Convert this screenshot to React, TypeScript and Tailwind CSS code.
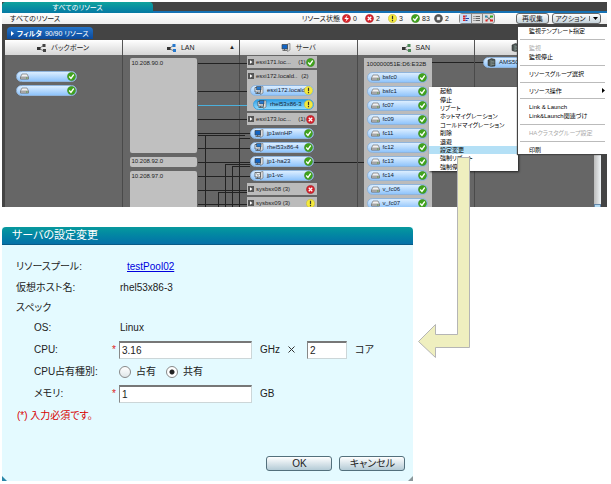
import { useState } from 'react';
import type { ReactNode } from 'react';

type Estado = 'critical' | 'error' | 'warn' | 'ok' | 'unknown';
type TipoIcono = 'disk' | 'esx' | 'pc' | 'vm' | 'rack';

const colorEstado: Record<Estado, string> = {
  critical: '#d8262c',
  error: '#d3202a',
  warn: '#f5ea3c',
  ok: '#3fa21c',
  unknown: '#555555',
};

function StatusIcon({ status }: { status: Estado }) {
  return (
    <svg className="size-[9px] shrink-0" viewBox="0 0 18 18">
      <circle cx="9" cy="9" r="8.4" fill={colorEstado[status]} stroke={status === 'warn' ? '#b9b040' : '#00000040'} />
      {status === 'critical' && <path d="M11 2.5 4.5 10H9l-2 5.5L14 8H9z" fill="#fff" />}
      {status === 'error' && <path d="m5.5 5.5 7 7m0-7-7 7" stroke="#fff" strokeWidth="2.6" />}
      {status === 'warn' && <path d="M9 3.5v6.8m0 1.7v2.6" stroke="#333" strokeWidth="2.4" />}
      {status === 'ok' && <path d="m4.5 9 3.4 3.8L13.5 5" fill="none" stroke="#fff" strokeWidth="2.6" />}
      {status === 'unknown' && <path d="M6 6h6v6H6z" fill="#fff" stroke="#bbb" />}
    </svg>
  );
}

function DeviceIcon({ kind }: { kind: TipoIcono }) {
  if (kind === 'disk') {
    return (
      <svg className="w-[9px] h-[7px] shrink-0" viewBox="0 0 18 14">
        <path d="M4 2h10l3 6v4H1V8z" fill="#f1f1f1" stroke="#777" strokeWidth="1.4" />
        <path d="M1 8h16v4H1z" fill="#bbb" stroke="#666" />
        <path d="M12 10h3" stroke="#3c9b28" strokeWidth="1.6" />
      </svg>
    );
  }
  if (kind === 'rack') {
    return (
      <svg className="size-[9px] shrink-0" viewBox="0 0 18 18">
        <path d="m2 4 7-3 7 2v13l-8 1-6-2z" fill="#4b5654" stroke="#222" />
        <path d="M8 4v13M9 7l6-.6M9 10l6-.4M9 13h6" stroke="#a9b8b2" />
      </svg>
    );
  }
  return (
    <svg className="w-[10px] h-[9px] shrink-0" viewBox="0 0 20 18">
      <path d="m13 2 5-1v13l-5 3z" fill="#ddd" stroke="#555" />
      <path d="M2 3h11v9H2z" fill={kind === 'pc' ? '#1264c4' : '#eef5fb'} stroke="#444" strokeWidth="1.4" />
      {kind === 'esx' && <path d="M5 1h9v7H5z" fill="#2679ce" stroke="#333" />}
      <path d="M3 15h9M7 12v3" stroke="#555" strokeWidth="1.6" />
      {kind === 'vm' && <path d="m5 5 3 4 4-4" fill="none" stroke="#555" strokeWidth="1.4" />}
    </svg>
  );
}

function NetIcon({ color }: { color: string }) {
  return (
    <svg className="w-[9px] h-2 shrink-0" viewBox="0 0 18 16">
      <path d="M4 9 13 3M4 9l10 5" stroke="#555" strokeWidth="1.4" />
      <path d="M0 6h7v6H0z" fill="#333" />
      <path d="M11 0h6v6h-6zM12 10h6v6h-6z" fill={color} />
    </svg>
  );
}

function Pill({ name, status, kind, active }: { name?: string; status?: Estado; kind: TipoIcono; active?: boolean }) {
  return (
    <button
      type="button"
      className={
        'flex h-[11px] w-full min-w-0 items-center gap-[3px] rounded-full border pl-[3px] text-[#123] ' +
        (active
          ? 'border-[#3fa4e0] bg-linear-to-b from-[#2b9fe6] to-[#8fdcff]'
          : 'border-[#8fb4dc] bg-linear-to-b from-[#dceeff] to-[#8fc4fb]')
      }
    >
      <DeviceIcon kind={kind} />
      <span className="min-w-0 flex-1 whitespace-nowrap text-left leading-[9px]">{name}</span>
      {status && <StatusIcon status={status} />}
    </button>
  );
}

function HostRow({ name, count, status }: { name: string; count: string; status?: Estado }) {
  return (
    <div className="flex h-3 items-center pl-px pr-0.5 text-[#222]">
      <svg className="size-[6px] shrink-0" viewBox="0 0 12 12">
        <path d="M0 0h12v12H0z" fill="#555" />
        <path d="m4 2.5 5 3.5-5 3.5z" fill="#fff" />
      </svg>
      <span className="ml-0.5 flex-1 whitespace-nowrap">{name}</span>
      <span>{count}</span>
      {status ? <StatusIcon status={status} /> : <span className="w-1.5 shrink-0" />}
    </div>
  );
}

function ColumnHead({ icon, title, sorted }: { icon: ReactNode; title: string; sorted?: boolean }) {
  return (
    <div className="relative flex h-[15px] items-center justify-center gap-[5px] border-r border-[#555] bg-linear-to-b from-white to-[#d6d6d6] text-[#222]">
      {icon}
      <span>{title}</span>
      {sorted && <span className="absolute right-1 text-[6px]">▲</span>}
    </div>
  );
}

const resumen: { status: Estado; count: number }[] = [
  { status: 'critical', count: 0 },
  { status: 'error', count: 2 },
  { status: 'warn', count: 3 },
  { status: 'ok', count: 83 },
  { status: 'unknown', count: 2 },
];

const servidores: { name: string; status: Estado; kind: TipoIcono }[] = [
  { name: 'jp1winHP', status: 'ok', kind: 'pc' },
  { name: 'rhel53x86-4', status: 'ok', kind: 'esx' },
  { name: 'jp1-ha23', status: 'ok', kind: 'pc' },
  { name: 'jp1-vc', status: 'ok', kind: 'vm' },
];

const san = ['bsfc0', 'bsfc1', 'fc07', 'fc09', 'fc11', 'fc12', 'fc13', 'fc14', 'v_fc06', 'v_fc07'];

const menuServidor = [
  '起動', '停止', 'リブート', 'ホットマイグレーション', 'コールドマイグレーション',
  '削除', '退避', '設定変更', '強制リブート', '強制停止',
];

// null = separador
const menuAccion: ({ label: string; disabled?: boolean; sub?: boolean } | null)[] = [
  { label: '監視テンプレート指定' },
  null,
  { label: '監視', disabled: true },
  { label: '監視停止' },
  null,
  { label: 'リソースグループ選択' },
  null,
  { label: 'リソース操作', sub: true },
  null,
  { label: 'Link & Launch' },
  { label: 'Link&Launch関連づけ' },
  null,
  { label: 'HAクラスタグループ設定', disabled: true },
  null,
  { label: '印刷' },
];

function Connectors() {
  return (
    <svg className="absolute left-0 top-0 h-[152px] w-[480px]" fill="none" stroke="#222" shapeRendering="crispEdges">
      <path d="M193 8h50M193 36h52M193 64h50M193 78h52M193 80h47M193 93h52M193 107h52M193 121h52M193 135h50M193 149h50" />
      <path d="M200 152V80M234 152V83h11M220 152v-43h25M227 152v-41h18M213 152v-15h30" />
      <path d="M306 107h53M427 7h52" />
      <path d="M193 50h58" stroke="#4bb0dc" />
    </svg>
  );
}

function ContextMenu() {
  return (
    <div className="absolute left-[427px] top-[85px] flex h-[84px] w-[89px] flex-col bg-white text-[6px] shadow-[1px_1px_2px_#222]">
      {menuServidor.map((m) => (
        <button
          key={m}
          type="button"
          className={
            'flex flex-1 items-center whitespace-nowrap pl-[11px] leading-[8px] text-black ' +
            (m === '設定変更' ? 'bg-[#b4e0f6]' : '')
          }
        >
          {m}
        </button>
      ))}
    </div>
  );
}

function ActionMenu() {
  return (
    <div className="absolute right-0 top-[25px] flex h-[127px] w-[89px] flex-col bg-white text-[6px] shadow-[-1px_1px_1px_#444]">
      {menuAccion.map((m, i) =>
        m ? (
          <button
            key={m.label}
            type="button"
            disabled={m.disabled}
            className={
              'flex flex-1 items-center whitespace-nowrap pl-[11px] pr-0.5 leading-[8px] ' +
              (m.disabled ? 'text-[#aaa]' : 'text-black')
            }
          >
            <span className="flex-1 text-left">{m.label}</span>
            {m.sub && (
              <svg className="h-[5px] w-[3px]" viewBox="0 0 3 5">
                <path d="m0 0 3 2.5L0 5z" />
              </svg>
            )}
          </button>
        ) : (
          <div key={i} className="flex flex-1 items-center px-0.5">
            <hr className="w-full border-[#bbb]" />
          </div>
        )
      )}
    </div>
  );
}

function ResourceWindow() {
  return (
    <section className="relative bg-[#444] text-[7px] leading-[9px]">
      <div className="flex h-[11px] border-b-2 border-[#1672b4]">
        <button
          type="button"
          className="-mb-0.5 h-[11px] w-[25%] rounded-t-sm bg-linear-to-b from-[#10a39c] to-[#0879a4] text-center text-white"
        >
          すべてのリソース
        </button>
      </div>

      <div className="flex h-[11px] items-center bg-linear-to-b from-white to-[#eee] pl-2 pr-1.5 text-[#222]">
        <h1 className="flex-1">すべてのリソース</h1>
        <span className="mr-0.5">リソース状態</span>
        <div className="flex">
          {resumen.map((r) => (
            <span key={r.status} className="flex w-[23px] items-center gap-0.5 whitespace-nowrap">
              <StatusIcon status={r.status} />
              {r.count}
            </span>
          ))}
        </div>
        <div className="ml-0.5 mr-[21px] flex h-[11px] divide-x divide-[#888] rounded-[3px] border border-[#888] bg-[#ddd]">
          <button type="button" aria-label="マップ" className="flex w-3 items-center justify-center bg-[#c8def5]">
            <svg className="h-[7px] w-2" viewBox="0 0 16 14">
              <path d="M2 1h5v3H2zM2 5h5v3H2zM2 9h5v3H2z" fill="#d22" />
              <path d="M7 2h3m-3 5h7M7 11h4" stroke="#24a" strokeWidth="2" />
            </svg>
          </button>
          <button type="button" aria-label="リスト" className="flex w-[11px] items-center justify-center">
            <svg className="h-[7px] w-2" viewBox="0 0 16 14">
              <path d="M1 3h2m2 0h9M1 7h2m2 0h9M1 11h2m2 0h9" stroke="#444" strokeWidth="1.6" />
            </svg>
          </button>
          <button type="button" aria-label="グループ" className="flex w-[11px] items-center justify-center">
            <svg className="h-[7px] w-2" viewBox="0 0 16 14">
              <path d="m3 3 10 8M13 3 3 11" stroke="#333" strokeWidth="1.2" />
              <path d="M0 1h5v4H0z" fill="#38a" />
              <path d="M10 1h6v4h-6z" fill="#3a2" />
              <path d="M1 9h4v4H1zM10 9h6v4h-6z" fill="#d22" />
            </svg>
          </button>
        </div>
        <button type="button" className="h-[11px] w-[33px] rounded-[3px] border border-[#666] bg-linear-to-b from-white to-[#c4d2da]">
          再収集
        </button>
        <button
          type="button"
          className="ml-[3px] flex h-[11px] w-[49px] items-center justify-center gap-[3px] whitespace-nowrap rounded-[3px] border border-[#666] bg-linear-to-b from-white to-[#c4d2da]"
        >
          アクション
          <span className="h-[5px] border-l border-[#777]" />
          <svg className="h-[3px] w-[5px] shrink-0" viewBox="0 0 5 3">
            <path d="M0 0h5L2.5 3z" />
          </svg>
        </button>
      </div>

      <div className="flex h-4 items-end pl-[5px]">
        <button
          type="button"
          className="mb-px flex h-3 items-center gap-[3px] whitespace-nowrap rounded-t-sm bg-linear-to-b from-[#2474c8] to-[#0b4a9c] px-1 text-white"
        >
          <svg className="h-[5px] w-[3px] shrink-0" viewBox="0 0 3 5">
            <path d="m0 0 3 2.5L0 5z" fill="#fff" />
          </svg>
          <strong>フィルタ</strong>
          <span>90/90 リソース</span>
        </button>
      </div>

      <div className="pl-[3px] pr-1.5">
        <div className="grid grid-cols-[repeat(4,minmax(0,1fr))_126px]">
          <ColumnHead icon={<NetIcon color="#444" />} title="バックボーン" />
          <ColumnHead icon={<NetIcon color="#2679ce" />} title="LAN" sorted />
          <ColumnHead icon={<DeviceIcon kind="pc" />} title="サーバ" />
          <ColumnHead icon={<NetIcon color="#4c8a58" />} title="SAN" />
          <div className="flex h-[15px] items-center bg-linear-to-b from-white to-[#d6d6d6] pl-9">
            <DeviceIcon kind="rack" />
          </div>
        </div>

        <div className="relative grid h-[152px] grid-cols-[repeat(4,minmax(0,1fr))_126px] overflow-hidden bg-[#666] text-[6px]">
          <Connectors />

          <div className="border-r border-[#4a4a4a] pl-[11px] pr-[45px] pt-4">
            <Pill kind="disk" status="ok" />
            <div className="mt-[3px]">
              <Pill kind="disk" status="ok" />
            </div>
          </div>

          <div className="flex flex-col gap-1 border-r border-[#4a4a4a] pl-[7px] pr-[42px] pt-[3px] text-[#222]">
            <div className="h-[95px] rounded-xs bg-[#c0c0c0] px-0.5 pt-px">10.208.90.0</div>
            <div className="h-[10px] rounded-xs bg-[#c0c0c0] px-0.5">10.208.92.0</div>
            <div className="h-10 rounded-xs bg-[#c0c0c0] px-0.5 pt-px">10.208.97.0</div>
          </div>

          <div className="relative flex flex-col gap-0.5 border-r border-[#4a4a4a] pl-[7px] pr-[40px] pt-px">
            <div className="bg-[#bbb]">
              <HostRow name="esxi171.loc..." count="(1)" status="ok" />
            </div>
            <div className="bg-[#bbb]">
              <HostRow name="esxi172.locald.." count="(2)" />
              <div className="mt-[3px] flex flex-col gap-[3px] pb-px pl-[3px] pr-[3px]">
                <Pill name="esxi172.locald." kind="esx" status="warn" />
                <div className="pl-[3px]">
                  <Pill name="rhel53x86-3" kind="esx" status="warn" active />
                </div>
              </div>
            </div>
            <div className="bg-[#bbb]">
              <HostRow name="esxi173.loc..." count="(1)" status="error" />
            </div>
            <div className="flex flex-col gap-[3px] pt-px pl-[3px] pr-[3px]">
              {servidores.map((s) => (
                <Pill key={s.name} {...s} />
              ))}
            </div>
            <div className="bg-[#bbb]">
              <HostRow name="sysbsx08 (3)" count="" status="error" />
            </div>
            <div className="bg-[#bbb]">
              <HostRow name="sysbsx09 (3)" count="" status="warn" />
            </div>
          </div>

          <div className="relative border-r border-[#4a4a4a] pl-[6px] pr-[42px] pt-[3px]">
            <div className="bg-[#bbb] pl-[3px] pr-1">
              <div className="h-[14px] whitespace-nowrap pt-0.5 text-[#222]">100000051E:D6:E32B</div>
              <div className="flex flex-col gap-[3px]">
                {san.map((s) => (
                  <Pill key={s} name={s} kind="disk" status="ok" />
                ))}
              </div>
            </div>
          </div>

          <div className="relative flex justify-between pl-2">
            <div className="w-[60px] pt-0.5">
              <Pill name="AMS500" kind="rack" />
            </div>
            <div className="flex w-[7px] flex-col bg-linear-to-r from-[#bbb] to-[#eef3f6]">
              <button
                type="button"
                aria-label="下へスクロール"
                className="mt-auto flex h-[7px] items-center justify-center border border-[#68a] bg-[#b4dcf4]"
              >
                <svg className="h-[2px] w-[3px] shrink-0" viewBox="0 0 3 2">
                  <path d="M0 0h3L1.5 2z" />
                </svg>
              </button>
            </div>
          </div>
        </div>
      </div>

      <ContextMenu />
      <ActionMenu />
    </section>
  );
}

const inputClass =
  'h-[18px] min-w-0 border border-[#ccd6d8] border-t-[#777] border-l-[#888] border-t-2 bg-white px-0.5 text-[#222] outline-none';

const radioClass =
  'size-3 appearance-none rounded-full border border-[#888] bg-linear-to-b from-white to-[#dfe6e8] checked:bg-[radial-gradient(circle,#222_0_2px,#fff_3px)]';

const botonClass =
  'h-[15px] w-[66px] rounded-[3px] border border-[#53707c] bg-linear-to-b from-white to-[#b4cbd6] leading-none text-[#222]';

function ServerDialog() {
  const [cpu, setCpu] = useState('3.16');
  const [cores, setCores] = useState('2');
  const [memoria, setMemoria] = useState('1');
  const [tipo, setTipo] = useState('shared');

  return (
    <form
      onSubmit={(e) => e.preventDefault()}
      className="relative mt-5 w-[68%] overflow-hidden bg-[#e4faff] pb-[10px] text-[10px] leading-[14px] text-[#222]"
    >
      <h2 className="h-[18px] rounded-t-sm border-b border-[#075a86] bg-linear-to-b from-[#08999d] to-[#0670a8] pl-[10px] text-[11px] leading-[17px] text-white">
        サーバの設定変更
      </h2>

      <div className="grid grid-cols-[96px_1fr] items-center pl-[14px] pt-[11px]">
        <span className="flex h-[21px] items-center">リソースプール:</span>
        <a href="#pool" className="pl-[15px] text-[#0000dd] underline">testPool02</a>
        <span className="flex h-[21px] items-center">仮想ホスト名:</span>
        <span className="pl-2">rhel53x86-3</span>
        <span className="col-span-2 flex h-5 items-center">スペック</span>
        <span className="flex h-5 items-center pl-[18px]">OS:</span>
        <span className="pl-2">Linux</span>

        <label htmlFor="cpu" className="pl-[18px]">CPU:</label>
        <div className="flex h-[23px] items-center">
          <span className="w-[7px] text-[#d22]">*</span>
          <input id="cpu" value={cpu} onChange={(e) => setCpu(e.target.value)} className={inputClass + ' w-[133px]'} />
          <span className="ml-2 w-[28px]">GHz</span>
          <svg className="mr-[12px] size-[7px]" viewBox="0 0 7 7" fill="none" stroke="#333">
            <path d="m.5.5 6 6m0-6-6 6" />
          </svg>
          <input
            id="cores"
            value={cores}
            onChange={(e) => setCores(e.target.value)}
            className={inputClass + ' w-10'}
          />
          <label htmlFor="cores" className="ml-2">コア</label>
        </div>

        <span className="whitespace-nowrap pl-[18px]">CPU占有種別:</span>
        <div className="flex h-[21px] items-center pl-[7px]">
          <input
            id="dedicated"
            type="radio"
            name="tipo"
            checked={tipo === 'dedicated'}
            onChange={() => setTipo('dedicated')}
            className={radioClass}
          />
          <label htmlFor="dedicated" className="ml-[5px] w-[30px]">占有</label>
          <input
            id="shared"
            type="radio"
            name="tipo"
            checked={tipo === 'shared'}
            onChange={() => setTipo('shared')}
            className={radioClass}
          />
          <label htmlFor="shared" className="ml-[5px]">共有</label>
        </div>

        <label htmlFor="memoria" className="pl-[18px]">メモリ:</label>
        <div className="flex h-[23px] items-center">
          <span className="w-[7px] text-[#d22]">*</span>
          <input
            id="memoria"
            value={memoria}
            onChange={(e) => setMemoria(e.target.value)}
            className={inputClass + ' w-[133px]'}
          />
          <span className="ml-2">GB</span>
        </div>
      </div>

      <p className="pl-[15px] pt-1 text-[#d80000]">(*) 入力必須です。</p>

      <div className="mt-[33px] flex justify-end gap-[7px] pr-2">
        <button type="submit" className={botonClass}>OK</button>
        <button type="button" className={botonClass}>キャンセル</button>
      </div>

      <svg className="absolute bottom-0 left-0 size-[5px]" viewBox="0 0 5 5">
        <path d="M0 0v5h5z" fill="#2a86a8" />
      </svg>
      <svg className="absolute bottom-0 right-0 size-[5px]" viewBox="0 0 5 5">
        <path d="M5 0v5H0z" fill="#8a979b" />
      </svg>
    </form>
  );
}

export default function App() {
  return (
    <main className="relative min-h-screen bg-white pl-0.5 pr-1 pt-0.5 font-['Liberation_Sans','Noto_Sans_CJK_JP',sans-serif] [font-feature-settings:'palt']">
      <ResourceWindow />
      <ServerDialog />
      {/* Flecha del menú al diálogo */}
      <svg className="absolute left-[417px] top-[157px] h-[204px] w-[54px]" fill="#efefbf" stroke="#b5b5b5">
        <path d="M40.5.5h12v190h-34v10L1.5 184.5l17-17v10h22z" />
      </svg>
    </main>
  );
}
